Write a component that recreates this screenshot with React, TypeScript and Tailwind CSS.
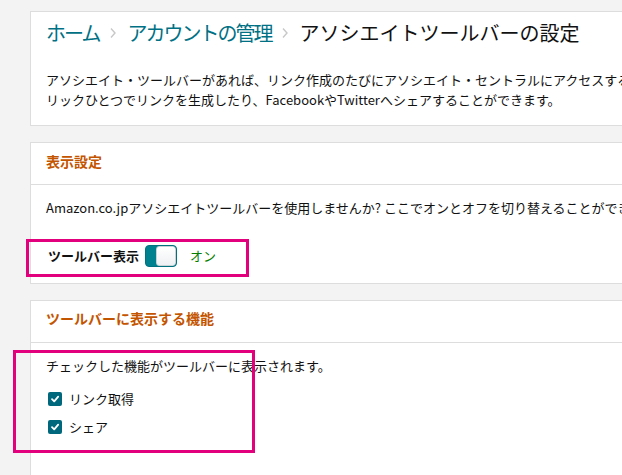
import React from "react";

const font = {
  fontFamily: '"Noto Sans CJK JP", "Noto Sans", sans-serif',
};

function Chevron() {
  return (
    <svg width="8" height="12" viewBox="0 0 8 12" className="mx-[10px]">
      <path d="M2 1.5 L6 6 L2 10.5" stroke="#c8c8c8" strokeWidth="1.4" fill="none" />
    </svg>
  );
}

function Toggle() {
  return (
    <div className="flex h-[22px] w-[32px] overflow-hidden rounded-[4px] border border-[#00717f] bg-[#00818f]">
      <div className="w-[10px]" />
      <div className="flex-1 rounded-[3px] border border-[#c9d3d6] bg-gradient-to-b from-white to-[#eef1f3]" />
    </div>
  );
}

function Check({ label }: { label: string }) {
  return (
    <div className="flex h-[28px] items-center">
      <span className="ml-[2px] flex h-[14px] w-[14px] items-center justify-center rounded-[2px] bg-[#00687d]">
        <svg width="10" height="10" viewBox="0 0 10 10">
          <path d="M2 5.2 L4.2 7.4 L8.2 2.6" stroke="white" strokeWidth="1.8" fill="none" strokeLinecap="round" strokeLinejoin="round" />
        </svg>
      </span>
      <span className="ml-[7px] text-[13px] text-[#111]">{label}</span>
    </div>
  );
}

export default function App() {
  return (
    <div
      className="relative h-[475px] w-[622px] overflow-hidden bg-[#f3f3f3] pl-[30px] pt-[11px]"
      style={font}
    >
      <div className="flex w-[640px] flex-col gap-[16px]">
        {/* page header card */}
        <div className="border border-[#dddddd] bg-white px-[15px] pb-[15px] pt-[7px]">
          <div className="flex h-[28px] items-center text-[20px] leading-[28px]">
            <span className="tracking-[-2px] text-[#007185]">ホーム</span>
            <Chevron />
            <span className="tracking-[-2px] text-[#007185]">アカウントの管理</span>
            <Chevron />
            <span className="text-[#111]">アソシエイトツールバーの設定</span>
          </div>
          <p className="mt-[23px] whitespace-nowrap text-[13px] leading-[20px] text-[#111]">
            アソシエイト・ツールバーがあれば、リンク作成のたびにアソシエイト・セントラルにアクセスすることなく、ク
            <br />
            リックひとつでリンクを生成したり、FacebookやTwitterへシェアすることができます。
          </p>
        </div>

        {/* display settings */}
        <div className="border border-[#dddddd] bg-white">
          <div className="border-b border-[#dddddd] px-[15px] pb-[13px] pt-[8px] text-[14px] font-semibold leading-[20px] text-[#c45500]">
            表示設定
          </div>
          <div className="px-[15px] pb-[16px] pt-[13px]">
            <p className="whitespace-nowrap text-[13px] leading-[20px] text-[#111]">
              Amazon.co.jpアソシエイトツールバーを使用しませんか? ここでオンとオフを切り替えることができます。
            </p>
            <div className="mt-[27px] flex items-center">
              <span className="ml-[2px] text-[13px] font-bold text-[#111]">ツールバー表示</span>
              <span className="ml-[6px]">
                <Toggle />
              </span>
              <span className="ml-[13px] text-[13px] text-[#067d00]">オン</span>
            </div>
          </div>
        </div>

        {/* toolbar features */}
        <div className="h-[200px] border border-[#dddddd] bg-white">
          <div className="border-b border-[#dddddd] px-[15px] pb-[13px] pt-[7px] text-[14px] font-bold leading-[21px] text-[#c45500]">
            ツールバーに表示する機能
          </div>
          <div className="px-[15px] pt-[13px]">
            <p className="text-[13px] leading-[20px] text-[#111]">
              チェックした機能がツールバーに表示されます。
            </p>
            <div className="mt-[9px]">
              <Check label="リンク取得" />
              <Check label="シェア" />
            </div>
          </div>
        </div>
      </div>

      {/* annotation frames */}
      <div className="absolute left-[26px] top-[239px] h-[38px] w-[223px] border-[3px] border-[#e2007d]" />
      <div className="absolute left-[13px] top-[350px] h-[103px] w-[242px] border-[3px] border-[#e2007d]" />
    </div>
  );
}
